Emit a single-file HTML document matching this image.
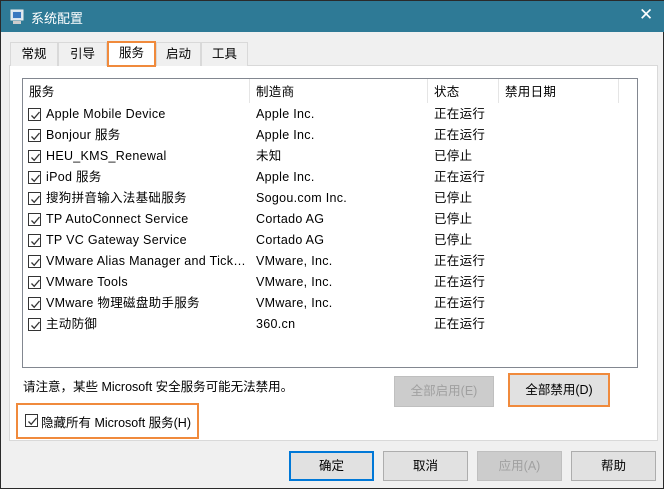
<!DOCTYPE html><html><head><meta charset="utf-8"><style>
*{box-sizing:border-box;margin:0;padding:0}
body{width:664px;height:489px;background:#f0f0f0;font-family:"Liberation Sans","Noto Sans CJK SC",sans-serif;font-size:12.5px;color:#000;position:relative;overflow:hidden;border:1px solid #2a2a2a}
.a{position:absolute}
.title{left:0;top:0;width:664px;height:31px;background:#2e7a96;color:#fff;font-size:13px}
.tab{top:41px;height:24px;border:1px solid #d9d9d9;border-bottom:none;background:#f0f0f0;text-align:center;line-height:22px}
.panel{left:8px;top:64px;width:649px;height:376px;border:1px solid #d9d9d9;background:#fff}
.list{left:21px;top:77px;width:616px;height:290px;border:1px solid #828790;background:#fff;letter-spacing:0.3px}
.row{position:absolute;left:0;height:21px;line-height:21px;white-space:nowrap}
.cb{position:absolute;left:5px;top:4px;width:13px;height:13px;border:1px solid #333;background:#fff}
.cb svg{position:absolute;left:1px;top:1px}
.btn{height:31px;border:1px solid #adadad;background:#e1e1e1;text-align:center;line-height:29px}
.org{border:2px solid #f08a3c}
</style></head><body>
<div class="a title">
<svg class="a" style="left:8px;top:8px" width="16" height="16"><rect x="2" y="1" width="12" height="10" fill="#d8e4f0" stroke="#eee"/><rect x="4" y="3" width="8" height="6" fill="#3a78c0"/><rect x="4" y="12" width="8" height="3" fill="#ccc"/></svg>
<span class="a" style="left:30px;top:7px">系统配置</span>
<span class="a" style="left:638px;top:4px;font-size:17px">✕</span>
</div>
<div class="a panel"></div>
<div class="a tab" style="left:9px;width:48px">常规</div>
<div class="a tab" style="left:57px;width:49px">引导</div>
<div class="a tab" style="left:155px;width:45px">启动</div>
<div class="a tab" style="left:200px;width:47px">工具</div>
<div class="a tab org" style="left:106px;top:40px;width:49px;height:26px;background:#fff;border:2px solid #f08a3c;line-height:20px">服务</div>
<div class="a list">
<div class="a" style="left:0;top:0;width:614px;height:25px">
<span class="a" style="left:6px;top:2px">服务</span>
<span class="a" style="left:226px;top:0;height:24px;border-left:1px solid #e5e5e5"></span>
<span class="a" style="left:233px;top:2px">制造商</span>
<span class="a" style="left:404px;top:0;height:24px;border-left:1px solid #e5e5e5"></span>
<span class="a" style="left:411px;top:2px">状态</span>
<span class="a" style="left:475px;top:0;height:24px;border-left:1px solid #e5e5e5"></span>
<span class="a" style="left:482px;top:2px">禁用日期</span>
<span class="a" style="left:595px;top:0;height:24px;border-left:1px solid #e5e5e5"></span>
</div>
<div id="rows"></div>
</div>
<script>
var d=[["Apple Mobile Device","Apple Inc.","正在运行"],["Bonjour 服务","Apple Inc.","正在运行"],["HEU_KMS_Renewal","未知","已停止"],["iPod 服务","Apple Inc.","正在运行"],["搜狗拼音输入法基础服务","Sogou.com Inc.","已停止"],["TP AutoConnect Service","Cortado AG","已停止"],["TP VC Gateway Service","Cortado AG","已停止"],["VMware Alias Manager and Tick…","VMware, Inc.","正在运行"],["VMware Tools","VMware, Inc.","正在运行"],["VMware 物理磁盘助手服务","VMware, Inc.","正在运行"],["主动防御","360.cn","正在运行"]];
var h="";d.forEach(function(r,i){var t=25+i*21;h+='<div class="row" style="top:'+t+'px;width:614px"><div class="cb"><svg width="11" height="11"><path d="M1.5 5.5L4.2 8.3L9.5 2" fill="none" stroke="#333" stroke-width="1.3"/></svg></div><span class="a" style="left:23px">'+r[0]+'</span><span class="a" style="left:233px">'+r[1]+'</span><span class="a" style="left:411px">'+r[2]+'</span></div>'});
document.getElementById("rows").innerHTML=h;
</script>
<span class="a" style="left:22px;top:375px">请注意，某些 Microsoft 安全服务可能无法禁用。</span>
<div class="a btn" style="left:393px;top:375px;width:100px;color:#a0a0a0;background:#cccccc;border-color:#bfbfbf">全部启用(E)</div>
<div class="a btn org" style="left:507px;top:372px;width:102px;height:34px;line-height:30px">全部禁用(D)</div>
<div class="a org" style="left:15px;top:402px;width:183px;height:36px"></div>
<div class="a" style="left:24px;top:413px;width:13px;height:13px;border:1px solid #333;background:#fff"><svg class="a" style="left:1px;top:1px" width="11" height="11"><path d="M1.5 5.5L4.2 8.3L9.5 2" fill="none" stroke="#333" stroke-width="1.3"/></svg></div>
<span class="a" style="left:40px;top:411px">隐藏所有 Microsoft 服务(H)</span>
<div class="a btn" style="left:288px;top:450px;width:85px;height:30px;border:2px solid #0078d7;line-height:26px">确定</div>
<div class="a btn" style="left:382px;top:450px;width:85px;height:30px">取消</div>
<div class="a btn" style="left:476px;top:450px;width:85px;height:30px;color:#a0a0a0;background:#cccccc;border-color:#bfbfbf">应用(A)</div>
<div class="a btn" style="left:570px;top:450px;width:85px;height:30px">帮助</div>
</body></html>
